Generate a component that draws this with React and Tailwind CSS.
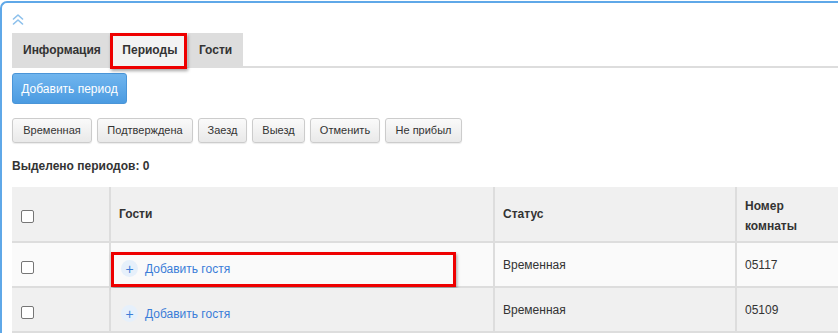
const STATUS_BUTTONS = [
  ['Временная', 'w-[80px]'],
  ['Подтверждена', 'w-[96px]'],
  ['Заезд', 'w-[49px]'],
  ['Выезд', 'w-[53px]'],
  ['Отменить', 'w-[70px]'],
  ['Не прибыл', 'w-[77px]'],
]

const ROWS = [
  { status: 'Временная', room: '05117', bg: 'bg-[#fafafa]', marked: true },
  { status: 'Временная', room: '05109', bg: 'bg-[#f0f0f0]', marked: false },
]

function Checkbox() {
  return <span className="block h-[13px] w-[13px] rounded-[2px] border border-[#767676] bg-white" />
}

function AddGuest() {
  return (
    <div className="flex items-center gap-[7px]">
      <span className="flex h-[17px] w-[17px] items-center justify-center rounded-full bg-[#e6f0fb] text-[14px] leading-none text-[#3b7dd8]">+</span>
      <span className="text-[12px] text-[#3b7dd8]">Добавить гостя</span>
    </div>
  )
}

export default function App() {
  return (
    <div className="h-[334px] w-[838px] overflow-hidden bg-white font-['Liberation_Sans',Arial,sans-serif] text-[#333]">
      <div className="mt-[1px] w-[900px] rounded-tl-[7px] border-l-2 border-t-2 border-[#5fa8e8] pl-[10px] pt-[10px]">
        <svg width="12" height="11" viewBox="0 0 12 11" fill="none" stroke="#8cc0ec" strokeWidth="1.6" strokeLinecap="round" strokeLinejoin="round" className="mt-[1px]">
          <polyline points="1.5,5 6,1 10.5,5" />
          <polyline points="1.5,10 6,6 10.5,10" />
        </svg>

        <div className="mt-[8px] flex h-[35px]">
          <div className="relative flex bg-[#dddddd] text-[12px] font-bold">
            <span className="flex h-[34px] items-center px-[11px]">Информация</span>
            <span className="flex h-[34px] w-[76px] items-center justify-center bg-[#f3f3f3]">Периоды</span>
            <span className="flex h-[34px] items-center px-[11px]">Гости</span>
            <span className="absolute left-[98px] top-0 h-[36px] w-[77px] border-[3px] border-[#ee0000] shadow-[1px_2px_3px_rgba(0,0,0,0.35)]" />
          </div>
          <div className="flex-1 border-b-2 border-[#dddddd]" />
        </div>

        <button className="mt-[5px] h-[31px] w-[115px] rounded-[3px] border border-[#4a95d8] bg-gradient-to-b from-[#70b5ee] to-[#4b9be1] text-[12px] text-white">
          Добавить период
        </button>

        <div className="mt-[14px] flex gap-[5px]">
          {STATUS_BUTTONS.map(([b, w]) => (
            <button
              key={b}
              className={`h-[25px] ${w} rounded-[3px] border border-[#cccccc] bg-gradient-to-b from-[#fafafa] to-[#e9e9e9] text-[11px] text-[#333] shadow-[0_1px_1px_rgba(0,0,0,0.08)]`}
            >
              {b}
            </button>
          ))}
        </div>

        <div className="mt-[16px] text-[12px] font-bold leading-[14px]">Выделено периодов: 0</div>

        <div className="mt-[14px] grid grid-cols-[99px_384px_242px_140px] text-[12px]">
          <div className="flex h-[56px] items-center border-b-2 border-r-2 border-[#dddddd] bg-[#f0f0f0] pl-[9px] pt-[5px]"><Checkbox /></div>
          <div className="flex h-[56px] items-center border-b-2 border-r-2 border-[#dddddd] bg-[#f0f0f0] pl-[8px] font-bold">Гости</div>
          <div className="flex h-[56px] items-center border-b-2 border-r-2 border-[#dddddd] bg-[#f0f0f0] pl-[8px] font-bold">Статус</div>
          <div className="flex h-[56px] items-center border-b-2 border-[#dddddd] bg-[#f0f0f0] pl-[8px] pt-[3px] font-bold leading-[20px]">Номер<br />комнаты</div>

          {ROWS.map((r) => (
            <div key={r.room} className="contents">
              <div className={`flex h-[45px] items-center border-b-2 border-r-2 border-[#dddddd] pl-[9px] pt-[6px] ${r.bg}`}><Checkbox /></div>
              <div className={`relative flex h-[45px] items-center border-b-2 border-r-2 border-[#dddddd] pl-[10px] pt-[8px] ${r.bg}`}>
                <AddGuest />
                {r.marked && (
                  <span className="absolute left-0 top-[9px] h-[35px] w-[345px] border-[3px] border-[#ee0000] shadow-[1px_2px_3px_rgba(0,0,0,0.35)]" />
                )}
              </div>
              <div className={`flex h-[45px] items-center border-b-2 border-r-2 border-[#dddddd] pl-[8px] pt-[1px] ${r.bg}`}>{r.status}</div>
              <div className={`flex h-[45px] items-center border-b-2 border-[#dddddd] pl-[8px] pt-[1px] ${r.bg}`}>{r.room}</div>
            </div>
          ))}
        </div>
      </div>
    </div>
  )
}
